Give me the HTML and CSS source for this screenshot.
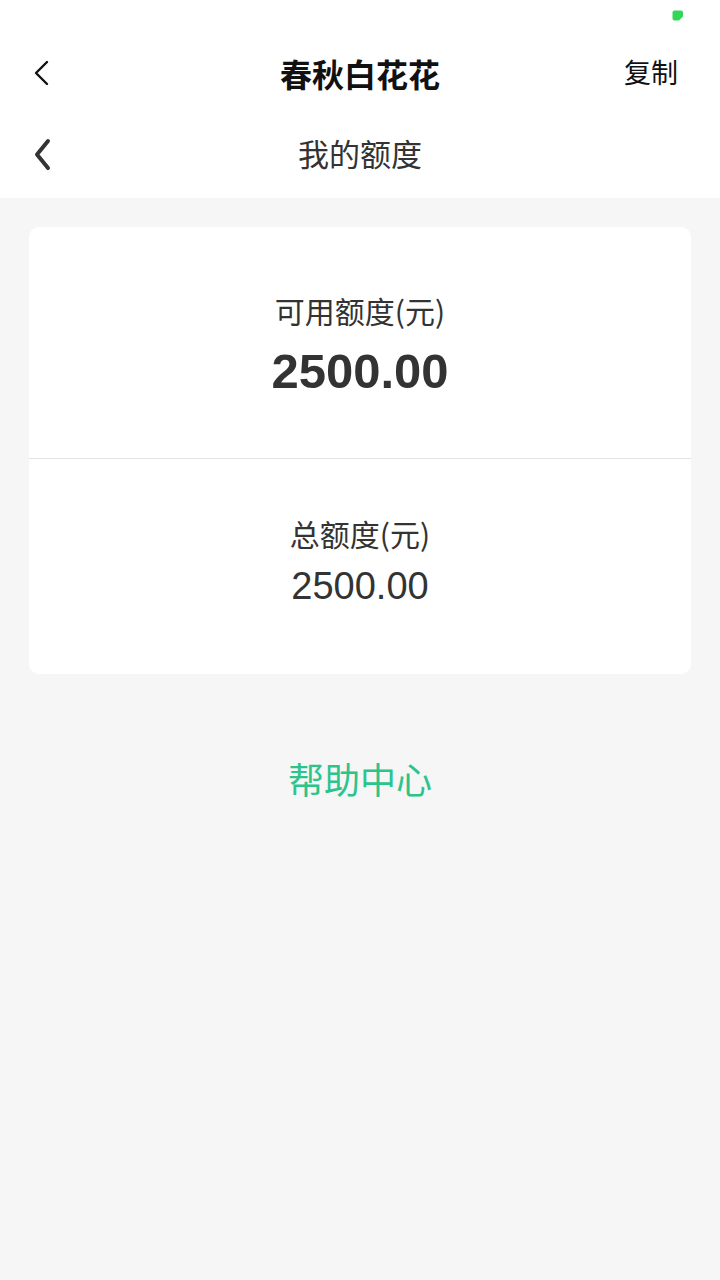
FILE: index.html
```html
<!DOCTYPE html>
<html lang="zh-CN">
<head>
<meta charset="utf-8">
<title>我的额度</title>
<link rel="stylesheet" href="styles.css">
</head>
<body>
<header class="top">
  <div class="status">
    <svg class="status-icon" width="12" height="12" viewBox="0 0 12 12">
      <path d="M2.5 0.5 H9 A2 2 0 0 1 11 2.5 V6.5 L7 10.5 H2.5 A2 2 0 0 1 0.5 8.5 V2.5 A2 2 0 0 1 2.5 0.5 Z" fill="#34d65a"/>
    </svg>
  </div>
  <div class="nav nav-main">
    <svg class="back thin" width="20" height="30" viewBox="0 0 20 30">
      <path d="M15 3 L4 14 L15 25" fill="none" stroke="#111" stroke-width="2.4" stroke-linecap="round" stroke-linejoin="round"/>
    </svg>
    <div class="nav-title">春秋白花花</div>
    <div class="nav-action">复制</div>
  </div>
  <div class="nav nav-sub">
    <svg class="back thick" width="22" height="36" viewBox="0 0 22 36">
      <path d="M16 4 L5 17.5 L16 31" fill="none" stroke="#333" stroke-width="4" stroke-linecap="round" stroke-linejoin="round"/>
    </svg>
    <div class="sub-title">我的额度</div>
  </div>
</header>

<main class="content">
  <section class="card">
    <div class="quota quota-avail">
      <div class="quota-label">可用额度(元)</div>
      <div class="quota-value bold">2500.00</div>
    </div>
    <div class="divider"></div>
    <div class="quota quota-total">
      <div class="quota-label">总额度(元)</div>
      <div class="quota-value regular">2500.00</div>
    </div>
  </section>
  <div class="help">帮助中心</div>
</main>
</body>
</html>
```
FILE: styles.css
```css
* { box-sizing: border-box; }

html, body {
  margin: 0;
  padding: 0;
}

body {
  width: 720px;
  min-height: 1280px;
  background: #f6f6f6;
  font-family: "Noto Sans CJK SC", "Liberation Sans", sans-serif;
  color: #333;
}

.top {
  background: #fff;
  height: 198px;
  display: flex;
  flex-direction: column;
}

.status {
  height: 33px;
  display: flex;
  justify-content: flex-end;
  align-items: flex-start;
  padding: 10px 36px 0 0;
}

.status-icon { display: block; }

.nav {
  position: relative;
  display: flex;
  align-items: center;
  justify-content: center;
}

.nav-main { height: 80px; }
.nav-sub { height: 85px; }

.back {
  position: absolute;
  display: block;
}

.back.thin { left: 32px; top: 26px; }
.back.thick { left: 32px; top: 24px; }

.nav-title {
  font-size: 32px;
  font-weight: 700;
  color: #111;
  line-height: 44px;
}

.nav-action {
  position: absolute;
  right: 42px;
  top: 19px;
  font-size: 27px;
  line-height: 40px;
  color: #111;
}

.sub-title {
  font-size: 31px;
  line-height: 44px;
  color: #333;
  margin-top: -5px;
}

.content {
  padding: 29px 29px 0;
  display: flex;
  flex-direction: column;
  align-items: stretch;
}

.card {
  background: #fff;
  border-radius: 10px;
  overflow: hidden;
}

.quota {
  display: flex;
  flex-direction: column;
  align-items: center;
}

.quota-avail {
  height: 231px;
  padding-top: 63px;
  gap: 13px;
}

.quota-total {
  height: 215px;
  padding-top: 54px;
  gap: 11px;
}

.divider {
  height: 1px;
  background: #e3e3e3;
}

.quota-label {
  font-size: 30px;
  line-height: 40px;
  color: #333;
}

.quota-value {
  font-family: "Liberation Sans", Arial, sans-serif;
  color: #333;
}

.quota-value.bold {
  font-size: 49px;
  line-height: 56px;
  font-weight: 700;
}

.quota-value.regular {
  font-size: 38px;
  line-height: 44px;
}

.help {
  margin-top: 79px;
  text-align: center;
  font-size: 36px;
  line-height: 50px;
  color: #2dc48c;
}
```
